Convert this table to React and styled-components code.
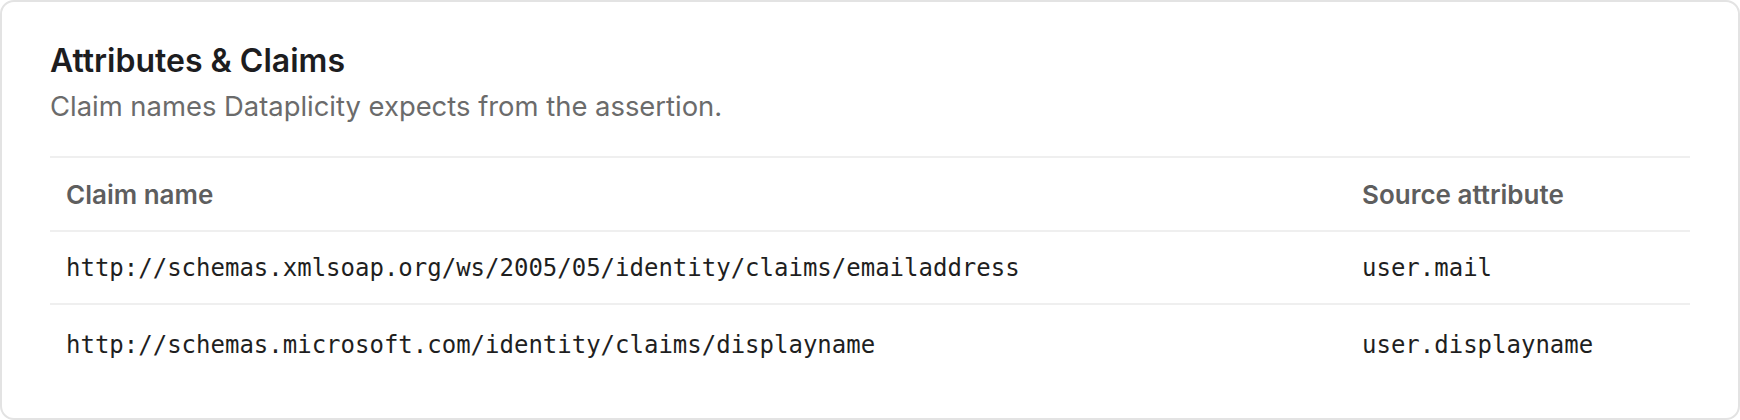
import React from 'react';
import styled, { createGlobalStyle } from 'styled-components';

const GlobalStyle = createGlobalStyle`
  html, body {
    margin: 0;
    padding: 0;
    background: #ffffff;
  }
  * {
    box-sizing: border-box;
  }
`;

const Card = styled.section`
  width: 1740px;
  height: 420px;
  background: #ffffff;
  border: 2px solid #e3e3e3;
  border-radius: 14px;
  padding: 39px 48px 0 48px;
  font-family: Inter, 'Noto Sans', sans-serif;
`;

const Title = styled.h2`
  margin: 0;
  font-size: 32px;
  line-height: 40px;
  font-weight: 600;
  color: #1d1d1f;
`;

const Subtitle = styled.p`
  margin: 7px 0 0;
  font-size: 27.4px;
  line-height: 36px;
  color: #6b6b6b;
`;

const Table = styled.div`
  margin-top: 32px;
  border-top: 2px solid #efefef;
  display: grid;
  grid-template-columns: 1fr 344px;
`;

const Cell = styled.div`
  padding: ${props => (props.last ? '4px 16px 0' : '0 16px')};
  height: ${props => (props.head ? '74px' : props.last ? '76px' : '73px')};
  display: flex;
  align-items: center;
  border-bottom: ${props => (props.last ? 'none' : '2px solid #efefef')};
  font-family: ${props =>
    props.mono ? "'DejaVu Sans Mono', Menlo, monospace" : "Inter, 'Noto Sans', sans-serif"};
  font-size: ${props => (props.mono ? '24px' : '26px')};
  font-weight: ${props => (props.head ? 600 : 400)};
  color: ${props => (props.head ? '#5e5e5e' : '#1f1f1f')};
  white-space: nowrap;
`;

const claims = [
  {
    name: 'http://schemas.xmlsoap.org/ws/2005/05/identity/claims/emailaddress',
    source: 'user.mail',
  },
  {
    name: 'http://schemas.microsoft.com/identity/claims/displayname',
    source: 'user.displayname',
  },
];

export default function App() {
  return (
    <>
      <GlobalStyle />
      <Card>
        <Title>Attributes &amp; Claims</Title>
        <Subtitle>Claim names Dataplicity expects from the assertion.</Subtitle>
        <Table>
          <Cell head>Claim name</Cell>
          <Cell head>Source attribute</Cell>
          {claims.map((c, i) => {
            const last = i === claims.length - 1;
            return (
              <React.Fragment key={c.name}>
                <Cell mono last={last}>{c.name}</Cell>
                <Cell mono last={last}>{c.source}</Cell>
              </React.Fragment>
            );
          })}
        </Table>
      </Card>
    </>
  );
}
